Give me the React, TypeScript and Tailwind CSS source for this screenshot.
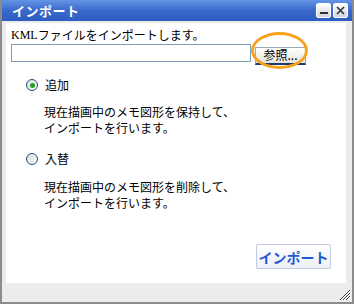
import React from 'react';

const jp = "font-['Noto_Sans_CJK_JP','Liberation_Sans',sans-serif]";

const Radio = ({ checked, label }: { checked?: boolean; label: string }) => (
    <div className="flex items-center gap-[7px] h-[16px]">
        <span className="w-[12px] h-[12px] rounded-full border border-[#1c5180] bg-gradient-to-br from-[#dcdcd6] to-white flex items-center justify-center">
            {checked && <span className="w-[5px] h-[5px] rounded-full bg-[#21a121]" />}
        </span>
        <span className="text-[12px] leading-[16px] text-black">{label}</span>
    </div>
);

export default function App() {
    return (
        <div className={`w-[354px] h-[304px] bg-[#ececec] border-l-2 border-b-2 border-r-2 border-[#8c8c8c] flex flex-col ${jp}`}>
            {/* Title bar */}
            <div className="h-[21px] shrink-0 bg-gradient-to-b from-[#6494e4] via-[#3a69cc] to-[#2d5cc2] flex items-center justify-between pl-[10px] pr-[4px]">
                <span className="text-white font-bold text-[13px] leading-none tracking-[0.5px]">インポート</span>
                <div className="flex gap-[2px]">
                    <button className="w-[15px] h-[15px] rounded-[2px] border border-white bg-gradient-to-b from-white to-[#d0d4dc] flex items-end justify-center pb-[3px]">
                        <span className="w-[8px] h-[2px] bg-[#333]" />
                    </button>
                    <button className="w-[15px] h-[15px] rounded-[2px] border border-white bg-gradient-to-b from-white to-[#d0d4dc] flex items-center justify-center">
                        <svg width="9" height="9" viewBox="0 0 9 9">
                            <path d="M1 1L8 8M8 1L1 8" stroke="#333" strokeWidth="1.6" />
                        </svg>
                    </button>
                </div>
            </div>

            {/* Body */}
            <div className="flex-1 pt-[2px] pl-[4px] pr-[6px] flex flex-col">
                <div className="bg-white h-[260px] pl-[5px] pt-[4px] flex flex-col">
                    <p className="text-[12px] leading-[16px] h-[16px] text-black">
                        <span className="font-['Liberation_Serif',serif] inline-block leading-[16px] h-[16px] align-top">KML</span>ファイルをインポートします。
                    </p>
                    <div className="flex items-center gap-[4px] mt-[1px] h-[18px]">
                        <input className="w-[240px] h-[18px] border border-[#7f9db9] bg-white outline-none" />
                        <div className="relative">
                            <button className="w-[51px] h-[18px] border border-[#9aa6bd] border-b-2 border-b-[#1d3a6e] bg-gradient-to-b from-white to-[#e4e4dc] text-[12px] leading-none text-black pb-[1px]">
                                参照...
                            </button>
                            <span className="absolute left-[-4px] top-[-9px] w-[57px] h-[37px] rounded-[50%] border-[3px] border-[#f6a21c] pointer-events-none" />
                        </div>
                    </div>

                    <div className="pl-[15px] mt-[15px]">
                        <Radio checked label="追加" />
                        <p className="text-[12px] leading-[16px] text-black pl-[18px] mt-[11px]">
                            現在描画中のメモ図形を保持して、<br />インポートを行います。
                        </p>
                    </div>

                    <div className="pl-[15px] mt-[15px]">
                        <Radio label="入替" />
                        <p className="text-[12px] leading-[16px] text-black pl-[18px] mt-[12px]">
                            現在描画中のメモ図形を削除して、<br />インポートを行います。
                        </p>
                    </div>

                    <div className="flex justify-end pr-[15px] mt-[33px]">
                        <button className="w-[75px] h-[25px] rounded-[2px] border border-[#c3cbe0] bg-gradient-to-b from-white to-[#eef0f6] text-[#1e58d2] text-[14px] font-bold leading-none">
                            インポート
                        </button>
                    </div>
                </div>
                <div className="flex-1 flex justify-end items-end pb-[1px] mr-[-5px]">
                    <svg width="12" height="12" viewBox="0 0 12 12">
                        <path d="M11 1L1 11M11 4L4 11M11 7L7 11" stroke="#444" strokeWidth="1" />
                        <path d="M11 2L2 11M11 5L5 11M11 8L8 11" stroke="#fff" strokeWidth="1" />
                    </svg>
                </div>
            </div>
        </div>
    );
}
